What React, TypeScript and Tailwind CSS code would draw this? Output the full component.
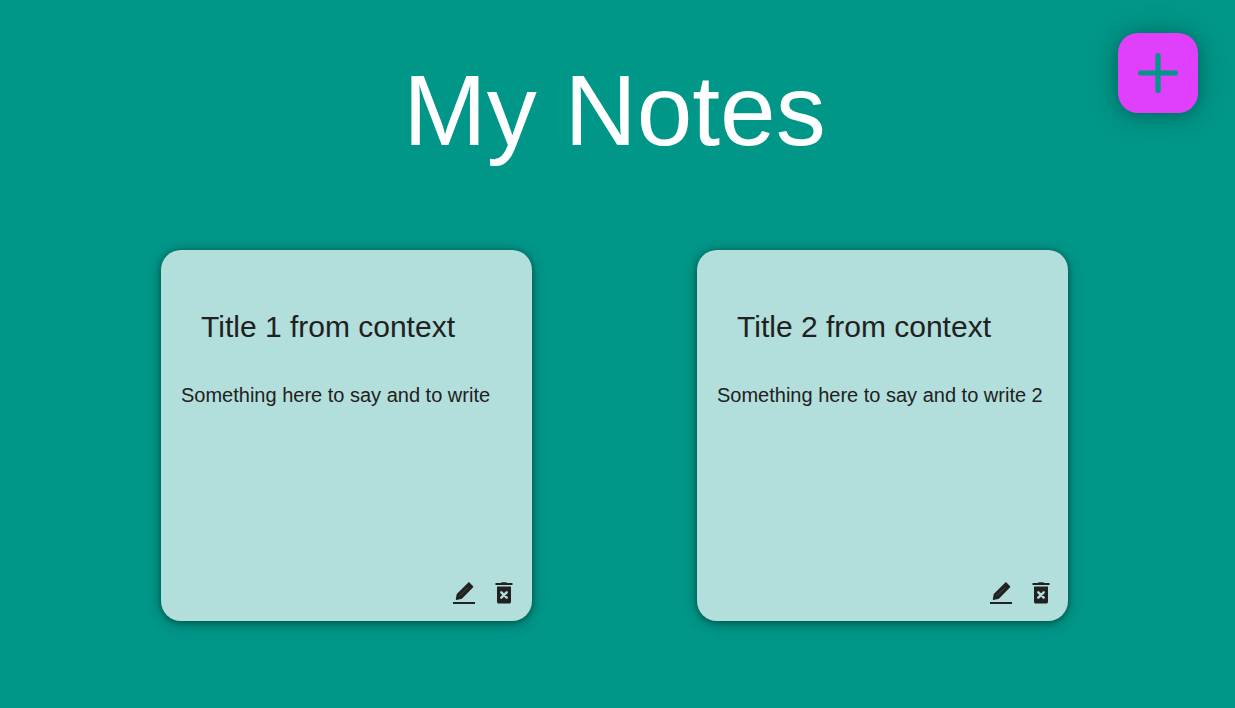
const cards = [
  { title: 'Title 1 from context', text: 'Something here to say and to write', inset: '-mr-1' },
  { title: 'Title 2 from context', text: 'Something here to say and to write 2', inset: '-mr-[5px]' },
];

function EditIcon() {
  return (
    <svg viewBox="0 0 24 24" className="h-6 w-6" fill="currentColor">
      <path d="M1 21h22v2H1z" />
      <path d="M4.400 19c-.4 0-.6-.3-.6-.7l.8-4.500c.1-.6.3-1 .7-1.400L16.100 1.700c.5-.5 1.100-.5 1.600 0l3.200 3.200c.5.5.5 1.100 0 1.600L10.400 17.300c-.4.4-.9.700-1.400.8z" />
      <path d="m7.500 15 8.800-8.800" stroke="#b2dfdb" strokeOpacity=".28" strokeWidth=".8" fill="none" />
    </svg>
  );
}

function DeleteIcon() {
  return (
    <svg viewBox="0 0 24 24" className="h-6 w-6" fill="currentColor">
      <path d="M4.500 2h4.200c.5-.5 1-.7 1.700-.7h3.200c.7 0 1.200.2 1.700.7h4.200c.8 0 1.200.4 1.200 1s-.4 1-1.200 1h-15c-.8 0-1.200-.4-1.200-1s.4-1 1.200-1zM5 5.500h14v15.200c0 1.100-.7 1.800-1.800 1.800H6.800c-1.100 0-1.800-.7-1.800-1.800z" />
      <path d="m9.300 11.300 5.400 5.400m0-5.400-5.400 5.400" stroke="#b2dfdb" strokeWidth="2.400" strokeLinecap="round" fill="none" />
    </svg>
  );
}

export default function App() {
  return (
    <main className="h-[708px] bg-[#009688] font-['Liberation_Sans',Arial,sans-serif] text-[#212121]">
      <header className="grid h-[250px] grid-cols-[1fr_auto_1fr] items-start px-[37px] pt-[33px]">
        <span />
        <h1 className="mt-[17px] -translate-x-[3px] text-[100px] leading-[120px] text-white">My Notes</h1>
        <button aria-label="Add note" className="flex h-20 w-20 items-center justify-center justify-self-end rounded-[20px] bg-[#e040fb] text-[#009688] shadow-[0_2px_18px_rgba(0,0,0,0.28),0_2px_36px_rgba(0,0,0,0.1)]">
          <svg viewBox="0 0 40 40" className="h-10 w-10" fill="none" stroke="currentColor" strokeWidth="5.200" strokeLinecap="round"><path d="M20 2.600v34.800M2.600 20h34.800" /></svg>
        </button>
      </header>
      <section className="flex gap-[165px] pl-[161px]">
        {cards.map((card) => (
          <article key={card.title} className="flex h-[371px] w-[371px] flex-col rounded-[20px] bg-[#b2dfdb] px-5 pt-[60px] pb-4 shadow-[0_1px_7px_rgba(0,0,0,0.4),0_3px_16px_rgba(0,0,0,0.2)]">
            <h2 className="pl-5 text-[30px] leading-[34px]">{card.title}</h2>
            <p className="mt-10 text-[20px] leading-[23px]">{card.text}</p>
            <div className={`mt-auto flex justify-end gap-4 ${card.inset}`}><EditIcon /><DeleteIcon /></div>
          </article>
        ))}
      </section>
    </main>
  );
}
